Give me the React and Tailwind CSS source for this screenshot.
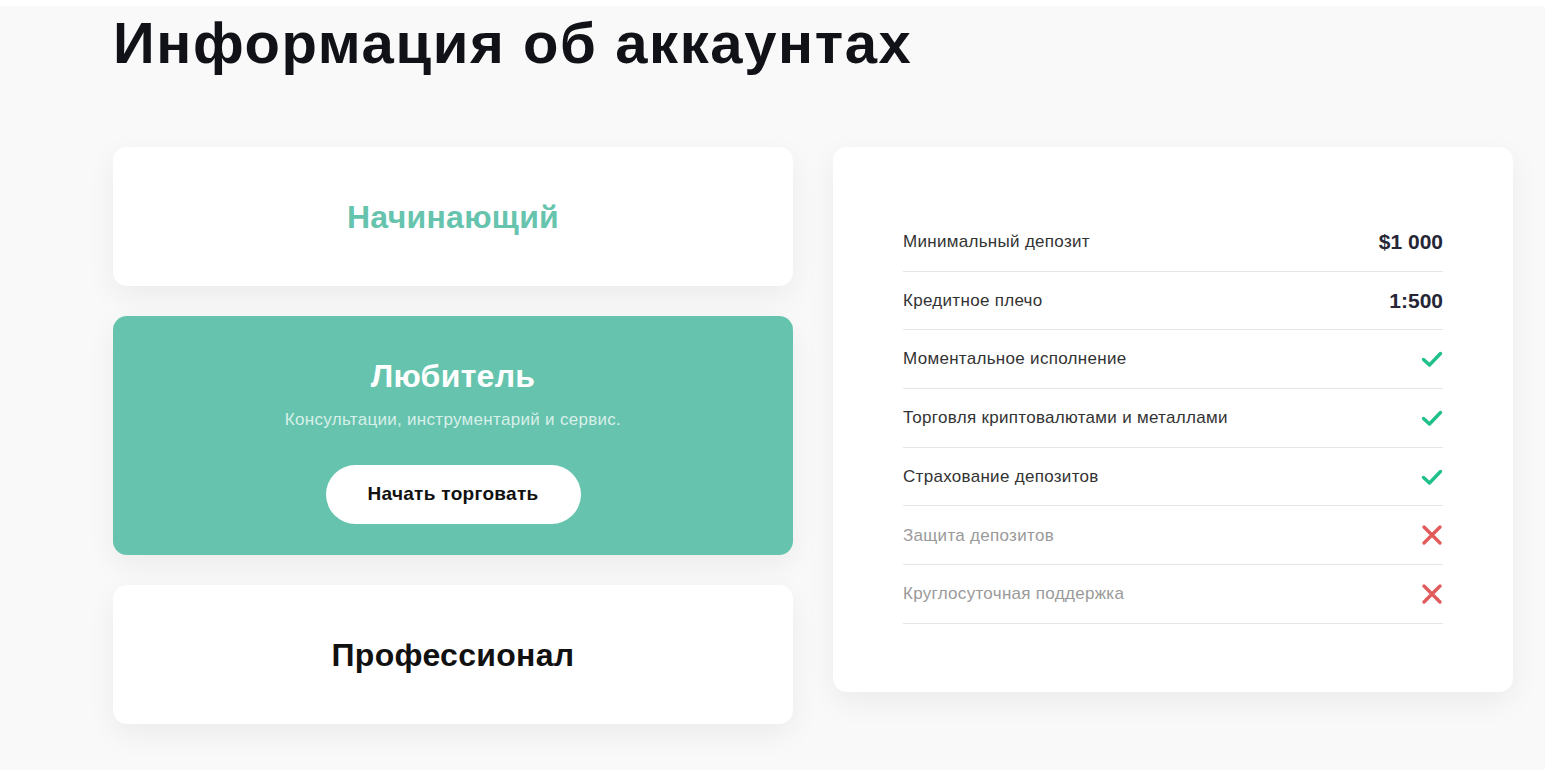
import React from 'react';

const rows = [
  { label: 'Минимальный депозит', value: '$1 000' },
  { label: 'Кредитное плечо', value: '1:500' },
  { label: 'Моментальное исполнение', ok: true },
  { label: 'Торговля криптовалютами и металлами', ok: true },
  { label: 'Страхование депозитов', ok: true },
  { label: 'Защита депозитов', ok: false },
  { label: 'Круглосуточная поддержка', ok: false },
];

function Check() {
  return (
    <svg width="22" height="18" viewBox="0 0 22 18" fill="none">
      <path d="M2.5 9.5l6 5.5L19.5 3.5" stroke="#1fc08b" strokeWidth="3.4" strokeLinecap="round" strokeLinejoin="round" />
    </svg>
  );
}

function Cross() {
  return (
    <svg width="22" height="22" viewBox="0 0 22 22" fill="none">
      <path d="M3 3l16 16M19 3L3 19" stroke="#e25b5b" strokeWidth="3.4" strokeLinecap="round" />
    </svg>
  );
}

export default function App() {
  return (
    <div className="min-h-screen bg-white font-['Liberation_Sans',Arial,sans-serif]">
      <div className="mt-[6px] min-h-[764px] bg-[#f9f9f9] pl-[113px] pr-[32px]">
        {/* heading */}
        <h1 className="pt-[4px] text-[58px] font-bold leading-[66px] tracking-[1.6px] text-[#111118]">
          Информация об аккаунтах
        </h1>

        <div className="mt-[71px] flex gap-[40px]">
          {/* account types */}
          <div className="flex w-[680px] flex-col gap-[30px]">
            <div className="flex h-[139px] items-center justify-center rounded-[14px] bg-white shadow-[0_10px_30px_rgba(0,0,0,0.06)]">
              <div className="text-[32px] font-bold tracking-[0.3px] text-[#66c4ae]">Начинающий</div>
            </div>

            <div className="flex h-[239px] flex-col items-center rounded-[14px] bg-[#66c4ae] pt-[40px] shadow-[0_10px_30px_rgba(0,0,0,0.06)]">
              <div className="text-[32px] font-bold leading-[40px] tracking-[0.3px] text-white">Любитель</div>
              <div className="mt-[14px] text-[17px] leading-[20px] tracking-[0.3px] text-white/75">
                Консультации, инструментарий и сервис.
              </div>
              <button className="mt-[35px] h-[59px] w-[255px] rounded-full bg-white text-[19px] font-bold tracking-[0.3px] text-[#111]">
                Начать торговать
              </button>
            </div>

            <div className="flex h-[139px] items-center justify-center rounded-[14px] bg-white shadow-[0_10px_30px_rgba(0,0,0,0.06)]">
              <div className="text-[32px] font-bold tracking-[0.3px] text-[#111]">Профессионал</div>
            </div>
          </div>

          {/* details */}
          <div className="w-[680px] self-start rounded-[14px] bg-white px-[70px] pt-[66px] pb-[68px] shadow-[0_10px_30px_rgba(0,0,0,0.06)]">
            {rows.map((r) => (
              <div
                key={r.label}
                className="flex h-[58.7px] items-center justify-between border-b border-[#e6e6e6]"
              >
                <span className={`text-[17px] tracking-[0.3px] ${r.ok === false ? 'text-[#9a9a9a]' : 'text-[#333]'}`}>
                  {r.label}
                </span>
                {r.value ? (
                  <span className="text-[21px] font-bold text-[#262636]">{r.value}</span>
                ) : r.ok ? (
                  <Check />
                ) : (
                  <Cross />
                )}
              </div>
            ))}
          </div>
        </div>
      </div>
    </div>
  );
}
